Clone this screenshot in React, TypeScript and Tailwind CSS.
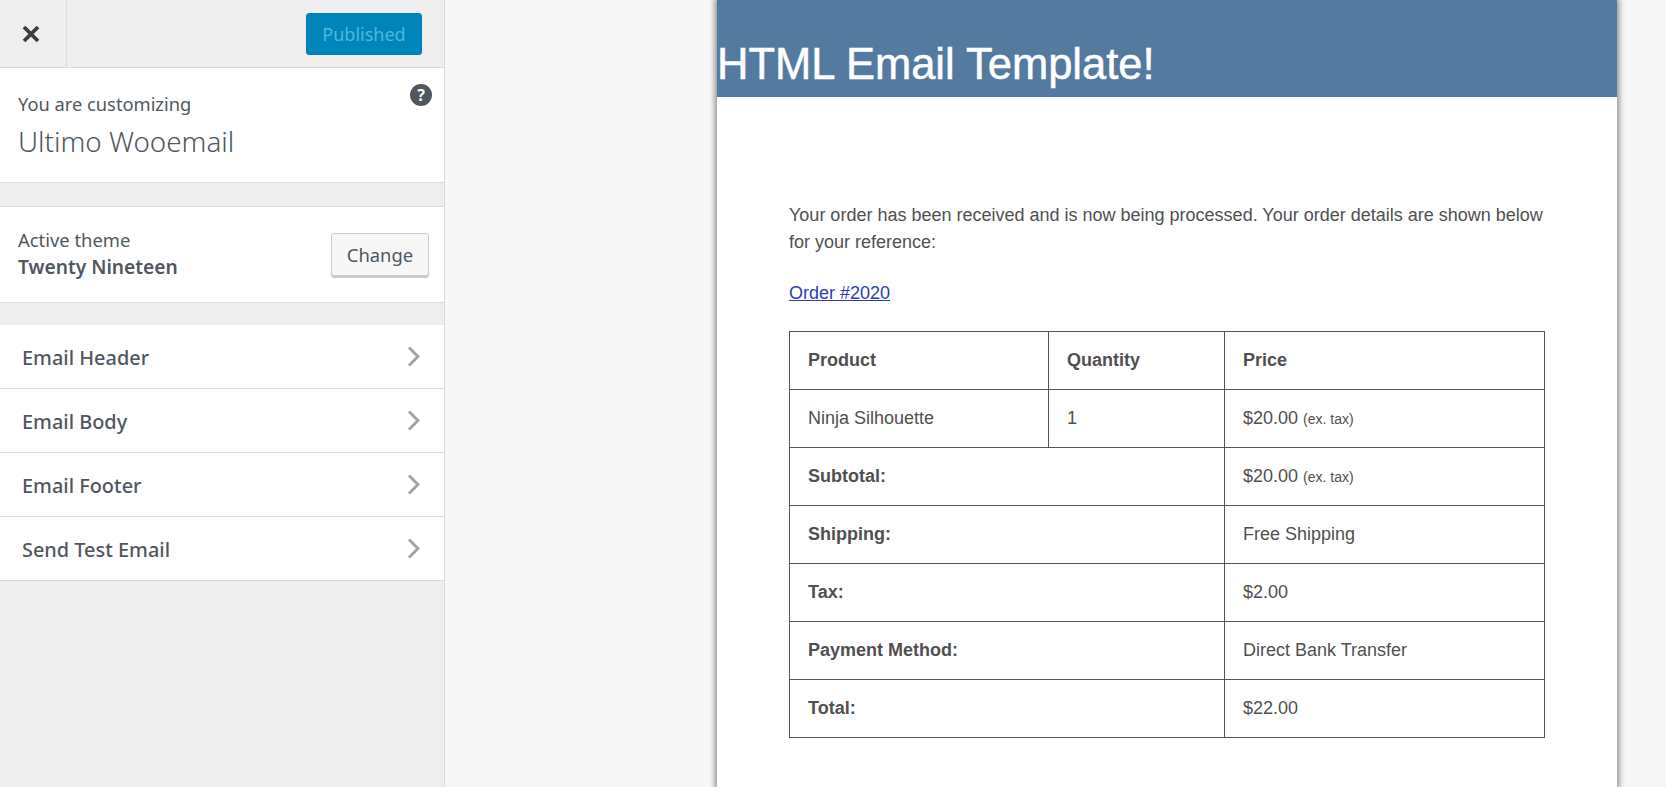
const SECTIONS = ['Email Header', 'Email Body', 'Email Footer', 'Send Test Email']

const TOTALS = [
  { label: 'Subtotal:', value: '$20.00', tax: true },
  { label: 'Shipping:', value: 'Free Shipping' },
  { label: 'Tax:', value: '$2.00' },
  { label: 'Payment Method:', value: 'Direct Bank Transfer' },
  { label: 'Total:', value: '$22.00' },
]

const cell = 'h-[58px] border border-[#555] px-[18px] text-left align-middle'

function Tax() {
  return <small className="text-[14px]">(ex. tax)</small>
}

function Sidebar() {
  return (
    <aside className="flex h-full w-[445px] shrink-0 flex-col border-r border-[#dcdcde] bg-[#eeeeee] font-['Noto_Sans',sans-serif] text-[#50575e]">
      <div className="flex h-[68px] shrink-0 items-center justify-between border-b border-[#dddddd] pr-[22px]">
        <div className="flex h-full w-[67px] items-center justify-center border-r border-[#dddddd] pr-[4px] text-[#3c3c3c]">
          <svg width="18" height="18" viewBox="0 0 18 18" aria-hidden="true">
            <path d="M2 2 16 16M16 2 2 16" stroke="currentColor" strokeWidth="3.8" fill="none" />
          </svg>
        </div>
        <button className="h-[42px] w-[116px] rounded-[3px] border border-[#0080b4] bg-[#0085ba] pt-[2px] text-[18px] text-[#4db8de]">Published</button>
      </div>

      <div className="relative h-[115px] shrink-0 border-b border-[#dddddd] bg-white pl-[18px] pt-[23px]">
        <div className="text-[18.3px] leading-[25px]">You are customizing</div>
        <div className="mt-[6px] text-[27.8px] font-light leading-[38px]">Ultimo Wooemail</div>
        <div className="absolute right-[12px] top-[16px] flex h-[22px] w-[22px] items-center justify-center rounded-full bg-[#50575e] text-[16px] font-bold leading-none text-white">?</div>
      </div>

      <div className="mt-[23px] flex h-[97px] shrink-0 items-center justify-between border-y border-[#dddddd] bg-white pl-[18px] pr-[15px]">
        <div className="pb-[3px]">
          <div className="-mt-px text-[18.4px] leading-[27px]">Active theme</div>
          <div className="text-[19.2px] font-semibold leading-[27px]">Twenty Nineteen</div>
        </div>
        <button className="h-[43px] w-[98px] rounded-[3px] border border-[#cccccc] bg-[#f7f7f7] text-[18.4px] shadow-[0_2px_0_#cccccc]">Change</button>
      </div>

      <ul className="mt-[22px] shrink-0 bg-white">
        {SECTIONS.map(name => (
          <li
            key={name}
            className="flex h-[64px] items-center justify-between border-b border-[#dddddd] pl-[22px] pr-[24px] text-[19.9px] font-medium"
          >
            <span className="pt-[2px]">{name}</span>
            <svg width="13" height="21" viewBox="0 0 13 21" aria-hidden="true" className="text-[#a0a5aa]">
              <path d="M2 1.5 11 10.5 2 19.5" stroke="currentColor" strokeWidth="3" fill="none" />
            </svg>
          </li>
        ))}
      </ul>
    </aside>
  )
}

function EmailPreview() {
  return (
    <div className="h-full w-[900px] bg-white font-['Liberation_Sans',Arial,sans-serif] text-[18px] text-[#505050] shadow-[0_0_6px_2px_rgba(0,0,0,0.45)]">
      <div className="flex h-[97px] items-end bg-[#557a9f] pb-[7px] text-[43.5px] leading-[52px] text-white [-webkit-text-stroke:0.5px_white]">
        <h1>HTML Email Template!</h1>
      </div>
      <div className="px-[72px] pt-[105px]">
        <p className="w-[756px] leading-[27px]">
          Your order has been received and is now being processed. Your order details are shown below for your reference:
        </p>
        <a href="#" className="mt-[24px] block leading-[27px] text-[#2a3eb1] underline">Order #2020</a>
        <table className="mt-[24px] w-[756px] table-fixed border-collapse">
          <colgroup>
            <col className="w-[259px]" />
            <col className="w-[176px]" />
            <col />
          </colgroup>
          <tbody>
            <tr>
              <th className={cell}>Product</th>
              <th className={cell}>Quantity</th>
              <th className={cell}>Price</th>
            </tr>
            <tr>
              <td className={cell}>Ninja Silhouette</td>
              <td className={cell}>1</td>
              <td className={cell}>$20.00 <Tax /></td>
            </tr>
            {TOTALS.map(row => (
              <tr key={row.label}>
                <th colSpan={2} className={cell}>{row.label}</th>
                <td className={cell}>{row.value} {row.tax && <Tax />}</td>
              </tr>
            ))}
          </tbody>
        </table>
      </div>
    </div>
  )
}

export default function App() {
  return (
    <div className="flex h-screen overflow-hidden bg-[#f7f7f7]">
      <Sidebar />
      <main className="flex-1 pl-[272px]">
        <EmailPreview />
      </main>
    </div>
  )
}
